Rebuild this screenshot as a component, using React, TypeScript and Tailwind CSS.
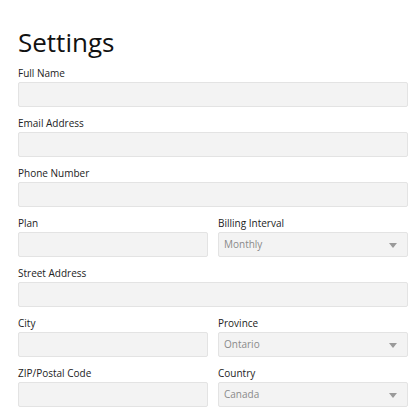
function Field({ label, value, select }: { label: string; value?: string; select?: boolean }) {
  return (
    <div className="flex flex-col min-w-0">
      <label className="text-[10px] leading-[10px] mb-[4px] text-[#222]">{label}</label>
      <div className="relative h-[25px] rounded-[2px] border border-[#e3e3e3] bg-[#f3f3f3] flex items-center px-[5px]">
        {select && (
          <>
            <span className="text-[10px] text-[#8a8a8a]">{value}</span>
            <span className="absolute right-[10px] top-[10px] w-0 h-0 border-l-[4px] border-r-[4px] border-t-[5px] border-l-transparent border-r-transparent border-t-[#9a9a9a]" />
          </>
        )}
      </div>
    </div>
  );
}

export default function App() {
  return (
    <div
      className="w-[416px] h-[416px] bg-white px-[18px] pt-[27px] overflow-hidden"
      style={{ fontFamily: '"Open Sans", "Liberation Sans", sans-serif' }}
    >
      <h1 className="text-[26px] leading-[30px] text-[#111] mb-[11px]">Settings</h1>
      <div className="flex flex-col gap-[11px] w-[390px]">
        <Field label="Full Name" />
        <Field label="Email Address" />
        <Field label="Phone Number" />
        <div className="grid grid-cols-2 gap-[10px]">
          <Field label="Plan" />
          <Field label="Billing Interval" value="Monthly" select />
        </div>
        <Field label="Street Address" />
        <div className="grid grid-cols-2 gap-[10px]">
          <Field label="City" />
          <Field label="Province" value="Ontario" select />
        </div>
        <div className="grid grid-cols-2 gap-[10px]">
          <Field label="ZIP/Postal Code" />
          <Field label="Country" value="Canada" select />
        </div>
      </div>
    </div>
  );
}
